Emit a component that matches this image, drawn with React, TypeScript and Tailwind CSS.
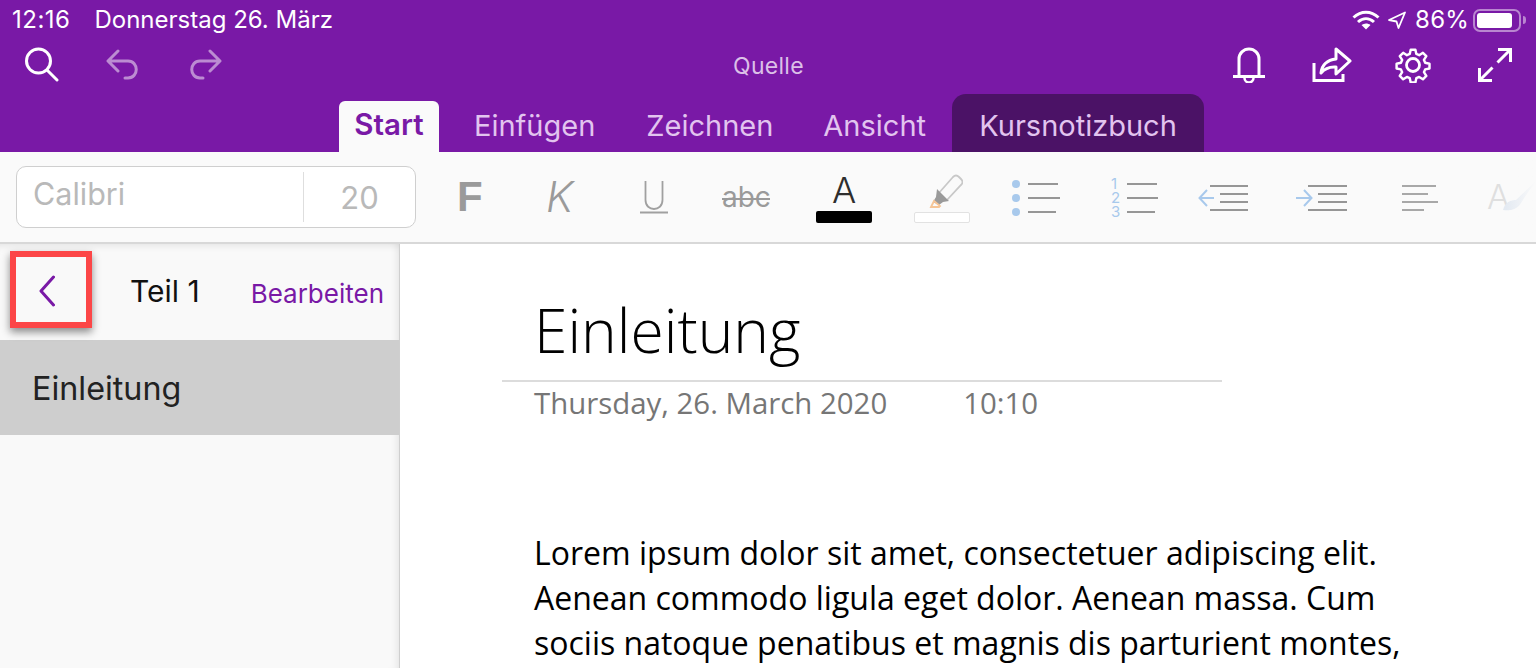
import React from "react";

function Ico({ w, h, className, children }: { w: number; h: number; className?: string; children: React.ReactNode }) {
  return (
    <svg width={w} height={h} viewBox={`0 0 ${w} ${h}`} fill="none" className={"shrink-0 " + (className ?? "")}>
      {children}
    </svg>
  );
}

export default function App() {
  return (
    <div className="w-[1536px] h-[668px] overflow-hidden bg-white flex flex-col font-['Inter','Liberation_Sans',sans-serif]">
      {/* Purple header */}
      <div className="h-[152px] bg-[#7919a6] shrink-0 flex flex-col text-white">
        <div className="h-[40px] flex items-center pl-[12px] pr-[10px] text-[24px] leading-none">
          <span className="tracking-[0.5px]">12:16</span>
          <span className="ml-[24px]">Donnerstag 26. März</span>
          <div className="ml-auto flex items-center">
            <Ico w={28} h={20}>
              <path d="M1.500 7.500C9 .5 19 .5 26.500 7.500" stroke="#fff" strokeWidth="3" />
              <path d="M6 12c5-4.500 11-4.500 16 0" stroke="#fff" strokeWidth="3" />
              <path d="M14 19.500 9.500 15c2.800-2 6.200-2 9 0z" fill="#fff" />
            </Ico>
            <Ico w={20} h={20} className="ml-[7px]">
              <path d="M2 10 18 2.500 11.500 18 9.500 11.500z" stroke="#fff" strokeWidth="1.800" strokeLinejoin="round" />
            </Ico>
            <span className="ml-[8px] tracking-[0.2px]">86%</span>
            <div className="ml-[4px] w-[48px] h-[23px] rounded-[7px] border-2 border-[#b986d0] p-[2px]">
              <div className="w-[35px] h-full bg-white rounded-[3px]" />
            </div>
            <div className="ml-[2px] w-[3px] h-[8px] bg-[#b986d0] rounded-r-sm" />
          </div>
        </div>
        <div className="h-[54px] relative flex items-start">
          <div className="pl-[23px] pt-[6px] flex items-center">
            <Ico w={36} h={36}>
              <circle cx="15.500" cy="15" r="12" stroke="#fff" strokeWidth="3" />
              <path d="M24 24 34 34" stroke="#fff" strokeWidth="3" strokeLinecap="round" />
            </Ico>
            <Ico w={34} h={32} className="ml-[47px] opacity-50">
              <path d="M12 3 2 13l10 10M2.500 13H22c11 0 11 17 0 17h-3" stroke="#fff" strokeWidth="3" strokeLinecap="round" strokeLinejoin="round" />
            </Ico>
            <Ico w={34} h={32} className="ml-[48px] opacity-50">
              <path d="M22 3l10 10-10 10M31.500 13H12c-11 0-11 17 0 17h3" stroke="#fff" strokeWidth="3" strokeLinecap="round" strokeLinejoin="round" />
            </Ico>
          </div>
          <div className="absolute left-[733px] top-[12px] text-[23px] leading-[28px] tracking-[0.3px] text-[#dcc0e8]">Quelle</div>
          <div className="ml-auto pr-[23px] pt-[7px] flex items-center">
            <Ico w={32} h={36}>
              <path d="M6 30V12a10 10 0 0 1 20 0v18" stroke="#fff" strokeWidth="3" />
              <path d="M0 29.500h32" stroke="#fff" strokeWidth="3" />
              <path d="M11.500 31a4.500 4.500 0 0 0 9 0" stroke="#fff" strokeWidth="2.500" />
            </Ico>
            <Ico w={40} h={36} className="ml-[47px]">
              <path d="M2 16v17.500h29V27" stroke="#fff" strokeWidth="3" />
              <path d="M24 2l14 12-14 13v-7c-7-.5-11 1-15 6 1-8 6-13 15-14z" stroke="#fff" strokeWidth="3" strokeLinejoin="round" />
            </Ico>
            <Ico w={36} h={36} className="ml-[43px]">
              <circle cx="18" cy="18" r="6.500" stroke="#fff" strokeWidth="2.800" />
              <path d="M15.500 2h5l1 4.500 3 1.300 4-2.500 3.600 3.600-2.500 4 1.300 3 4.600 1v5l-4.600 1-1.300 3 2.500 4-3.600 3.600-4-2.500-3 1.300-1 4.500h-5l-1-4.500-3-1.300-4 2.500-3.600-3.600 2.500-4-1.300-3-4.600-1v-5l4.600-1 1.300-3-2.500-4 3.600-3.600 4 2.500 3-1.300z" stroke="#fff" strokeWidth="2.600" strokeLinejoin="round" transform="scale(.94) translate(1.200 .9)" />
            </Ico>
            <Ico w={36} h={36} className="ml-[46px]">
              <path d="M21 2.500h12.500V15M33 3 20.500 15.500M15 33.500H2.500V21M3 33l12.500-12.500" stroke="#fff" strokeWidth="3" />
            </Ico>
          </div>
        </div>
        <div className="h-[58px] flex items-end pl-[339px] text-[29px] leading-none">
          <div className="w-[100px] h-[51px] bg-[#fafafa] rounded-t-[6px] flex items-center justify-center font-semibold text-[29.500px] text-[#7919a6] pb-[3px]">Start</div>
          <div className="h-[51px] ml-[35px] flex items-center text-[#e2c4ef] pb-[2px]">Einfügen</div>
          <div className="h-[51px] ml-[51px] flex items-center text-[#e2c4ef] pb-[2px]">Zeichnen</div>
          <div className="h-[51px] ml-[50px] flex items-center text-[#e2c4ef] pb-[2px]">Ansicht</div>
          <div className="h-[58px] w-[252px] ml-[26px] bg-[#4b1266] rounded-t-[14px] flex items-center justify-center pt-[4px] text-[#e2c4ef]">Kursnotizbuch</div>
        </div>
      </div>

      {/* Ribbon */}
      <div className="h-[92px] shrink-0 bg-[#fafafa] border-b-2 border-[#d8d8d8] flex items-center relative overflow-hidden">
        <div className="ml-[16px] w-[400px] h-[62px] rounded-[10px] border border-[#cfcfcf] bg-white flex items-center text-[#b9b9b9]">
          <div className="w-[286px] pl-[16px] pb-[6px] leading-none text-[30.500px]">Calibri</div>
          <div className="w-px h-[50px] bg-[#dedede]" />
          <div className="flex-1 text-center leading-none text-[31px]">20</div>
        </div>
        <div className="ml-[41px] w-[32px] text-[42px] leading-none font-bold text-[#9a9a9a] font-['Liberation_Sans']">F</div>
        <div className="ml-[57px] w-[36px] text-[42px] leading-none italic text-[#9a9a9a] font-light">K</div>
        <div className="ml-[58px] w-[28px]">
          <Ico w={28} h={34}>
            <path d="M5.500 1v19c0 12 17 12 17 0V1" stroke="#a0a0a0" strokeWidth="1.800" />
            <path d="M0 32.500h28" stroke="#a0a0a0" strokeWidth="2" />
          </Ico>
        </div>
        <div className="ml-[54px] w-[48px] relative text-[28px] leading-none text-[#9a9a9a] text-center">
          abc
          <div className="absolute left-0 right-0 top-[15px] h-[2px] bg-[#9a9a9a]" />
        </div>
        <div className="ml-[46px] w-[56px] flex flex-col items-center pt-[4px]">
          <div className="text-[36px] leading-[30px] font-light text-[#2e2e2e]">A</div>
          <div className="w-[56px] h-[12px] bg-black rounded-[2px] mt-[6px]" />
        </div>
        <div className="ml-[42px] w-[56px] flex flex-col items-center pt-[3px]">
          <Ico w={42} h={36}>
            <path d="M17 20 32 3c2-2 4-2 6 0l2 2c2 2 2 4 0 6L26 26" stroke="#c8c8c8" strokeWidth="1.800" />
            <path d="M16 15 28 27l-6 1-4 3-6-3 3-5z" fill="#9a9a9a" />
            <path d="M10 33l3-6 6 5-1 1z" stroke="#f6c596" strokeWidth="1.800" />
          </Ico>
          <div className="w-[56px] h-[11px] bg-white border border-[#e2e2e2] rounded-[2px] mt-[2px]" />
        </div>
        <div className="ml-[42px]">
          <Ico w={52} h={38}>
            <circle cx="4" cy="6" r="4" fill="#a8c9ec" />
            <circle cx="4" cy="20" r="4" fill="#a8c9ec" />
            <circle cx="4" cy="34" r="4" fill="#a8c9ec" />
            <path d="M16 6h30M16 20h32M16 34h28" stroke="#969696" strokeWidth="2" />
          </Ico>
        </div>
        <div className="ml-[47px] flex">
          <div className="flex flex-col w-[16px] text-[15px] leading-[14px] text-[#a8c9ec] pt-[1px]">
            <span>1</span>
            <span>2</span>
            <span>3</span>
          </div>
          <Ico w={32} h={42}>
            <path d="M0 8h30M0 22h31M0 36h28" stroke="#969696" strokeWidth="2" />
          </Ico>
        </div>
        <div className="ml-[39px]">
          <Ico w={52} h={36}>
            <path d="M1 19h15M9 11l-7.500 8 7.500 8" stroke="#a8c9ec" strokeWidth="2" />
            <path d="M12 7h38M22 15h28M22 23h28M12 31h38" stroke="#969696" strokeWidth="2" />
          </Ico>
        </div>
        <div className="ml-[46px]">
          <Ico w={52} h={36}>
            <path d="M0 19h15M8 11l7.500 8L8 27" stroke="#a8c9ec" strokeWidth="2" />
            <path d="M12 7h39M22 15h29M22 23h29M12 31h39" stroke="#969696" strokeWidth="2" />
          </Ico>
        </div>
        <div className="ml-[54px]">
          <Ico w={36} h={30}>
            <path d="M0 4h34M0 12h26M0 20h36M0 28h22" stroke="#a8a8a8" strokeWidth="2" />
          </Ico>
        </div>
        <div className="ml-[49px] relative w-[49px]">
          <div className="text-[34px] font-light leading-none text-[#dfdfdf]">A</div>
          <Ico w={38} h={36} className="absolute left-[14px] -top-[2px]">
            <path d="M2 32c2-8 8-10 13-10 8-8 14-13 21-20-5 7-10 13-16 23-4 7-12 8-18 7z" fill="#e4eaf2" />
          </Ico>
        </div>
        <div className="absolute right-0 top-0 bottom-0 w-[30px] bg-gradient-to-l from-[#fafafa] to-transparent" />
      </div>

      {/* Body */}
      <div className="flex-1 flex min-h-0">
        <div className="w-[400px] shrink-0 bg-[#f9f9f9] border-r border-[#cfcfcf] flex flex-col shadow-[inset_0_8px_10px_-8px_rgba(0,0,0,0.12),inset_-8px_0_10px_-8px_rgba(0,0,0,0.12)]">
          <div className="h-[96px] shrink-0 flex items-center relative">
            <Ico w={16} h={32} className="ml-[39px] mb-[2px]">
              <path d="M14.500 2 2 16l12.500 14" stroke="#7919a6" strokeWidth="3" strokeLinecap="round" strokeLinejoin="round" />
            </Ico>
            <span className="ml-[75px] text-[30px] leading-none text-[#111] mb-[2px]">Teil 1</span>
            <span className="ml-auto mr-[15px] mt-[3px] text-[26px] leading-none text-[#7919a6]">Bearbeiten</span>
            <div className="absolute left-[10px] top-[7px] w-[82px] h-[77px] border-[6px] border-[#fc4647] shadow-[0_4px_8px_rgba(0,0,0,0.45)]" />
          </div>
          <div className="h-[95px] shrink-0 bg-[#cecece] pl-[32px] pt-[3px] flex items-center text-[32.300px] text-[#222] leading-none">
            Einleitung
          </div>
        </div>
        <div className="flex-1 min-w-0 pl-[102px] font-['Open_Sans',sans-serif]">
          <div className="w-[720px] h-[138px] border-b-2 border-[#dcdcdc] pl-[32px] pt-[46px] text-[60.500px] leading-[80px] text-black font-light">
            Einleitung
          </div>
          <div className="pl-[32px] pt-[1px] flex text-[29.400px] leading-[40px] text-[#767676]">
            <span>Thursday, 26. March 2020</span>
            <span className="ml-[76px]">10:10</span>
          </div>
          <div className="pl-[32px] pt-[107px] text-[32px] leading-[45px] text-black whitespace-nowrap">
            <div>Lorem ipsum dolor sit amet, consectetuer adipiscing elit.</div>
            <div>Aenean commodo ligula eget dolor. Aenean massa. Cum</div>
            <div>sociis natoque penatibus et magnis dis parturient montes,</div>
          </div>
        </div>
      </div>
    </div>
  );
}
